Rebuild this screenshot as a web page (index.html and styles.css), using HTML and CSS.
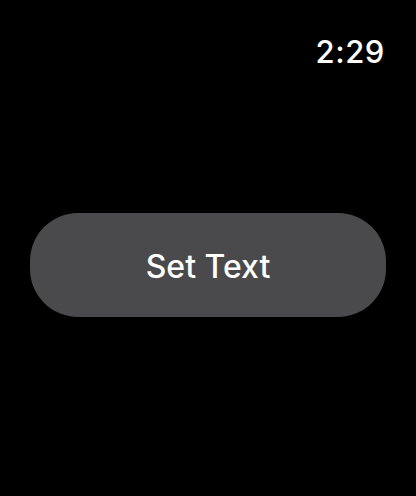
FILE: index.html
```html
<!DOCTYPE html>
<html>
<head>
<meta charset="utf-8">
<link rel="stylesheet" href="styles.css">
</head>
<body>
<div class="screen">
  <div class="status"><span class="time">2:29</span></div>
  <div class="content">
    <button class="btn">Set Text</button>
  </div>
</div>
</body>
</html>
```
FILE: styles.css
```css
html, body {
  margin: 0;
  padding: 0;
  background: #000;
}
.screen {
  width: 416px;
  height: 496px;
  display: flex;
  flex-direction: column;
  font-family: Inter, "Noto Sans", sans-serif;
  color: #fff;
}
.status {
  display: flex;
  justify-content: flex-end;
  padding: 32px 31px 0 0;
  height: 40px;
}
.time {
  font-size: 31px;
  font-weight: 500;
  line-height: 40px;
  letter-spacing: 0.6px;
}
.content {
  padding: 141px 30px 0 30px;
}
.btn {
  display: block;
  width: 356px;
  height: 104px;
  border: none;
  border-radius: 48px;
  background: #4a4a4c;
  color: #fff;
  font-family: Inter, "Noto Sans", sans-serif;
  font-size: 32px;
  font-weight: 500;
  padding: 2px 0 0 0;
}
```
